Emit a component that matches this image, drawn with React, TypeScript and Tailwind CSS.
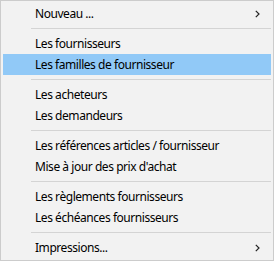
import React from "react";

type Entry =
  | { kind: "item"; label: string; sub?: boolean; active?: boolean }
  | { kind: "sep" };

const entries: Entry[] = [
  { kind: "item", label: "Nouveau ...", sub: true },
  { kind: "sep" },
  { kind: "item", label: "Les fournisseurs" },
  { kind: "item", label: "Les familles de fournisseur", active: true },
  { kind: "sep" },
  { kind: "item", label: "Les acheteurs" },
  { kind: "item", label: "Les demandeurs" },
  { kind: "sep" },
  { kind: "item", label: "Les références articles / fournisseur" },
  { kind: "item", label: "Mise à jour des prix d'achat" },
  { kind: "sep" },
  { kind: "item", label: "Les règlements fournisseurs" },
  { kind: "item", label: "Les échéances fournisseurs" },
  { kind: "sep" },
  { kind: "item", label: "Impressions...", sub: true },
];

const Chevron = () => (
  <svg width="5" height="8" viewBox="0 0 5 8" className="shrink-0">
    <path d="M0.8 0.8 L4 4 L0.8 7.2" fill="none" stroke="#222" strokeWidth="1.2" />
  </svg>
);

const App = () => {
  return (
    <div className="w-[274px] h-[261px] bg-[#f2f2f2] border border-[#cccccc] px-[2px] py-[2px] text-[12px] text-black tracking-[-0.45px] font-['Noto_Sans',sans-serif]">
      {entries.map((e, i) =>
        e.kind === "sep" ? (
          <div key={i} className="h-[9px] flex items-center pl-[28px]">
            <div className="h-px w-full bg-[#d4d4d4]" />
          </div>
        ) : (
          <div
            key={i}
            className={`h-[21px] flex items-center pl-[32px] pr-[11px] ${e.active ? "bg-[#91c9f7]" : ""}`}
          >
            <span className="flex-1 leading-none whitespace-nowrap">{e.label}</span>
            {e.sub && <Chevron />}
          </div>
        )
      )}
    </div>
  );
};

export default App;
